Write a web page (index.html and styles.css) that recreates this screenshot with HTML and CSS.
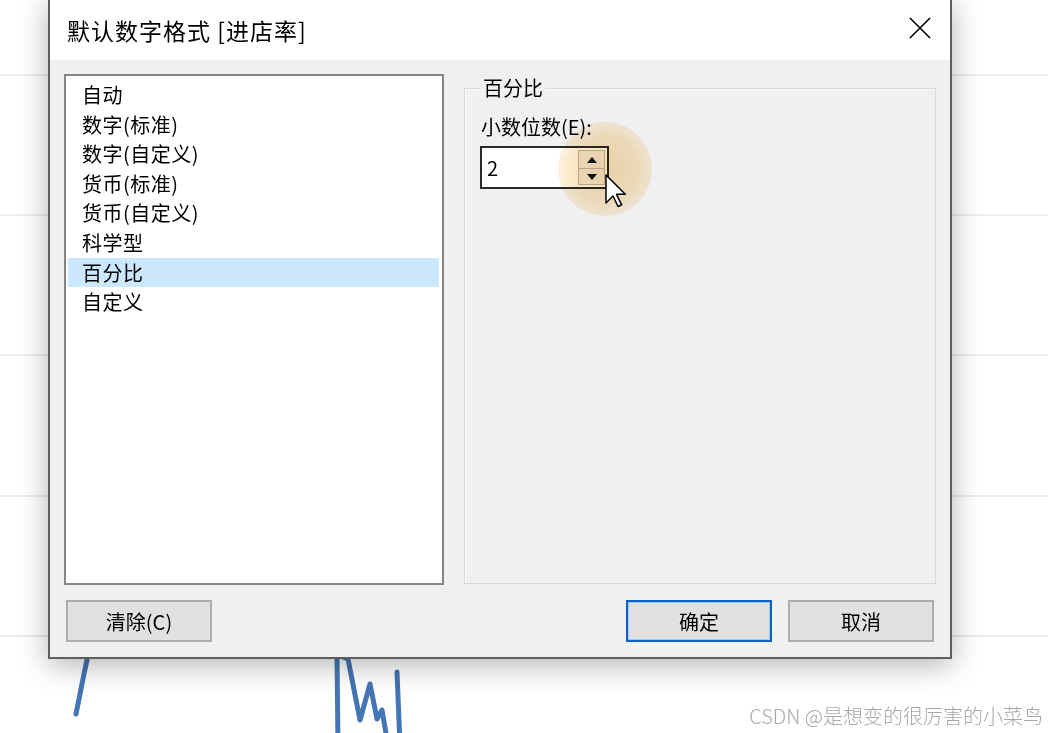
FILE: index.html
```html
<!DOCTYPE html>
<html lang="zh-CN">
<head>
<meta charset="utf-8">
<title>默认数字格式</title>
<link rel="stylesheet" href="styles.css">
</head>
<body>
<div class="screen">
  <svg class="chart" width="1048" height="733" viewBox="0 0 1048 733">
    <g stroke="#ececec" stroke-width="2">
      <line x1="0" y1="75" x2="1048" y2="75"/>
      <line x1="0" y1="215" x2="1048" y2="215"/>
      <line x1="0" y1="355" x2="1048" y2="355"/>
      <line x1="0" y1="496" x2="1048" y2="496"/>
      <line x1="0" y1="636" x2="1048" y2="636"/>
    </g>
    <g fill="none" stroke="#4475b4" stroke-width="5" stroke-linecap="round" stroke-linejoin="round">
      <path d="M88 655 L84 674 L76 714"/>
      <path d="M338 745 L337 655 L348 659 L360 720 L370 684 L377 719 L382 710 L388 745"/>
      <path d="M397 672 L400 745"/>
    </g>
  </svg>

  <div class="dialog">
    <div class="titlebar">
      <span class="title">默认数字格式 [进店率]</span>
      <svg class="close" width="22" height="22" viewBox="0 0 22 22">
        <path d="M1 1 L21 21 M21 1 L1 21" stroke="#000" stroke-width="1.6" fill="none"/>
      </svg>
    </div>
    <div class="body">
      <div class="main">
        <ul class="list">
          <li>自动</li>
          <li>数字(标准)</li>
          <li>数字(自定义)</li>
          <li>货币(标准)</li>
          <li>货币(自定义)</li>
          <li>科学型</li>
          <li class="selected">百分比</li>
          <li>自定义</li>
        </ul>
        <fieldset class="group">
          <legend>百分比</legend>
          <div class="field-label">小数位数(E):</div>
          <div class="spin">
            <span class="spin-value">2</span>
            <div class="spin-buttons">
              <div class="spin-btn up"><span class="tri-up"></span></div>
              <div class="spin-btn down"><span class="tri-down"></span></div>
            </div>
          </div>
        </fieldset>
      </div>
      <div class="buttons">
        <button class="btn">清除(C)</button>
        <div class="spacer"></div>
        <button class="btn primary">确定</button>
        <button class="btn">取消</button>
      </div>
    </div>
  </div>

  <div class="glow"></div>
  <svg class="cursor" width="24" height="36" viewBox="0 0 24 36">
    <polygon points="1,1 1,29 8,22 13,32.5 16.7,30.8 11.5,20.3 20.3,20.3" fill="#fff" stroke="#000" stroke-width="1.5" stroke-linejoin="round"/>
  </svg>

  <div class="watermark">CSDN @是想变的很厉害的小菜鸟</div>
</div>
</body>
</html>
```

FILE: styles.css
```css
html, body {
  margin: 0;
  padding: 0;
  background: #ffffff;
  font-family: "Noto Sans CJK SC", "Noto Sans", sans-serif;
  color: #000;
}

.screen {
  position: relative;
  width: 1048px;
  height: 733px;
  overflow: hidden;
  background: #fff;
}

.chart {
  display: block;
}

.dialog {
  position: absolute;
  left: 48px;
  top: -2px;
  width: 904px;
  height: 661px;
  box-sizing: border-box;
  border: 2px solid #5e5e5e;
  background: #f0f0f0;
  display: flex;
  flex-direction: column;
  box-shadow: 0 6px 28px rgba(0, 0, 0, 0.3);
}

.titlebar {
  height: 60px;
  flex: none;
  background: #fff;
  display: flex;
  align-items: center;
  padding-left: 17px;
}

.title {
  font-size: 23px;
  line-height: 30px;
  letter-spacing: 1px;
  flex: 1;
}

.close {
  margin-right: 19px;
  margin-bottom: 4px;
  display: block;
}

.body {
  flex: 1;
  padding: 14px 14px 15px 14px;
  display: flex;
  flex-direction: column;
}

.main {
  height: 511px;
  display: flex;
  gap: 20px;
}

.list {
  width: 380px;
  box-sizing: border-box;
  margin: 0;
  padding: 4px 3px 0 2px;
  list-style: none;
  background: #fff;
  border: 2px solid #858585;
  font-size: 20px;
}

.list li {
  line-height: 29.6px;
  height: 29.6px;
  padding-left: 14px;
  white-space: nowrap;
  letter-spacing: 0.5px;
}

.list li.selected {
  background: #cce8ff;
}

.group {
  flex: 1;
  margin: 0 0 1px 0;
  padding: 0 16px;
  border: 1px solid #d8d8d8;
  box-shadow: inset 1px 1px 0 #fafafa;
  min-width: 0;
}

.group legend {
  padding: 0 2px;
  font-size: 20px;
  line-height: 28px;
}

.field-label {
  margin-top: 11px;
  font-size: 20px;
  line-height: 28px;
}

.spin {
  margin-top: 5px;
  margin-left: -1px;
  width: 129px;
  height: 43px;
  box-sizing: border-box;
  border: 2px solid #2a2a2a;
  background: #fff;
  display: flex;
  align-items: stretch;
}

.spin-value {
  flex: 1;
  padding-left: 5px;
  font-size: 20px;
  line-height: 39px;
}

.spin-buttons {
  width: 27px;
  padding: 2px 2px 2px 0;
  display: flex;
  flex-direction: column;
}

.spin-btn {
  box-sizing: border-box;
  border: 1px solid #b8b8b8;
  background: #efefef;
  display: flex;
  align-items: center;
  justify-content: center;
}

.spin-btn.up {
  height: 19px;
}

.spin-btn.down {
  height: 16px;
  border-top: none;
}

.tri-up {
  width: 0;
  height: 0;
  border-left: 5px solid transparent;
  border-right: 5px solid transparent;
  border-bottom: 6px solid #111;
}

.tri-down {
  width: 0;
  height: 0;
  border-left: 5px solid transparent;
  border-right: 5px solid transparent;
  border-top: 6px solid #111;
}

.buttons {
  margin-top: 15px;
  height: 42px;
  padding: 0 2px;
  display: flex;
  gap: 16px;
}

.spacer {
  flex: 1;
}

.btn {
  width: 146px;
  height: 42px;
  box-sizing: border-box;
  border: 2px solid #adadad;
  background: #e1e1e1;
  font-family: "Noto Sans CJK SC", "Noto Sans", sans-serif;
  font-size: 20px;
  color: #000;
  padding: 0;
  margin: 0;
}

.btn.primary {
  border: 2px solid #0b63c3;
  box-shadow: inset 0 0 0 1px #9ccaf0;
}

.glow {
  position: absolute;
  left: 558px;
  top: 122px;
  width: 94px;
  height: 94px;
  border-radius: 50%;
  background: radial-gradient(circle, rgba(240, 190, 100, 0.5) 0%, rgba(242, 195, 110, 0.4) 50%, rgba(245, 205, 130, 0.18) 78%, rgba(245, 205, 130, 0) 100%);
  mix-blend-mode: multiply;
  pointer-events: none;
}

.cursor {
  position: absolute;
  left: 605px;
  top: 174px;
  display: block;
}

.watermark {
  position: absolute;
  right: 5px;
  bottom: 4px;
  font-size: 20px;
  line-height: 26px;
  font-weight: 300;
  color: #a8a8a8;
  white-space: nowrap;
}
```
